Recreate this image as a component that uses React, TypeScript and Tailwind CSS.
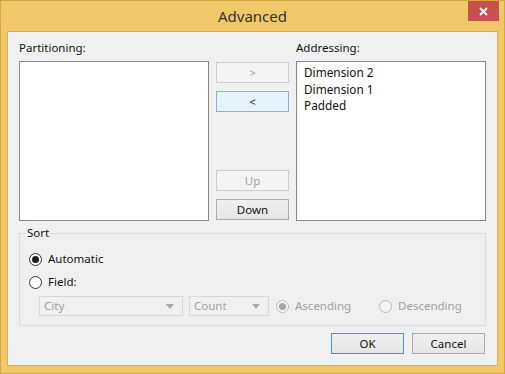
import React from "react";

const font = { fontFamily: '"Noto Sans", "Open Sans", sans-serif' };

function Radio({ checked, disabled }: { checked?: boolean; disabled?: boolean }) {
  return (
    <span
      className={
        "flex h-[13px] w-[13px] items-center justify-center rounded-full border " +
        (disabled ? "border-[#bcbcbc] bg-[#f4f4f4]" : "border-[#333333] bg-white")
      }
    >
      {checked && (
        <span className={"h-[7px] w-[7px] rounded-full " + (disabled ? "bg-[#a5a5a5]" : "bg-[#1e1e1e]")} />
      )}
    </span>
  );
}

function Btn({ label, kind }: { label: string; kind: "disabled" | "hot" | "normal" | "default" }) {
  const cls = {
    disabled: "border-[#cfcfcf] bg-[#f4f4f4] text-[#a3a3a3]",
    hot: "border-[#7eb4ea] bg-[#e5f1fb] text-[#222]",
    normal: "border-[#acacac] bg-gradient-to-b from-[#f0f0f0] to-[#e5e5e5] text-[#111]",
    default: "border-[#3399ff] bg-gradient-to-b from-[#f0f0f0] to-[#e5e5e5] text-[#111]",
  }[kind];
  return (
    <div className={"flex h-[21px] w-[73px] items-center justify-center border text-[11.5px] " + cls}>
      {label}
    </div>
  );
}

function Combo({ label, w }: { label: string; w: string }) {
  return (
    <div className={"flex h-[20px] items-center justify-between border border-[#d9d9d9] bg-[#f0f0f0] pl-[4px] pr-[8px] text-[#a0a0a0] " + w}>
      <span>{label}</span>
      <svg width="8" height="5" viewBox="0 0 8 5">
        <path d="M0 0h8L4 5z" fill="#a8a8a8" />
      </svg>
    </div>
  );
}

export default function App() {
  return (
    <div style={font} className="h-[374px] w-[505px] border border-[#d7a63c] bg-[#f0c86a] text-[#111]">
      {/* title bar */}
      <div className="grid h-[30px] grid-cols-[1fr_auto_1fr]">
        <div />
        <div className="pt-[2px] text-[15px] leading-[26px] text-[#333]">Advanced</div>
        <div className="flex justify-end pr-[5px]">
          <div className="flex h-[20px] w-[31px] items-center justify-center bg-[#c75050]">
            <svg width="9" height="9" viewBox="0 0 9 9">
              <path d="M1 1l7 7M8 1l-7 7" stroke="white" strokeWidth="1.8" />
            </svg>
          </div>
        </div>
      </div>

      {/* client area */}
      <div className="mx-[6px] h-[335px] border border-[#d9ae52] bg-[#f0f0f0] px-[11px] pt-[8px] text-[11.5px]">
        <div className="flex">
          <div className="flex w-[190px] flex-col">
            <div className="h-[21px] leading-[16px]">Partitioning:</div>
            <div className="h-[160px] border border-[#828790] bg-white" />
          </div>
          <div className="mx-[7px] flex w-[73px] flex-col justify-between pb-[1px] pt-[22px]">
            <div className="flex flex-col gap-[8px]">
              <Btn label=">" kind="disabled" />
              <Btn label="<" kind="hot" />
            </div>
            <div className="flex flex-col gap-[8px]">
              <Btn label="Up" kind="disabled" />
              <Btn label="Down" kind="normal" />
            </div>
          </div>
          <div className="flex w-[190px] flex-col">
            <div className="h-[21px] leading-[16px]">Addressing:</div>
            <div className="h-[160px] border border-[#828790] bg-white px-[7px] pt-[2px] text-[11.8px] leading-[16.5px]">
              <div>Dimension 2</div>
              <div>Dimension 1</div>
              <div>Padded</div>
            </div>
          </div>
        </div>

        {/* sort group */}
        <div className="relative mt-[12px] h-[93px] w-[467px] border border-[#dcdcdc] pl-[9px] pt-[17px]">
          <span className="absolute left-[6px] top-[-9px] bg-[#f0f0f0] px-[1px] leading-[16px]">Sort</span>
          <div className="flex h-[16px] items-center gap-[6px]">
            <Radio checked />
            <span>Automatic</span>
          </div>
          <div className="mt-[7px] flex h-[16px] items-center gap-[6px]">
            <Radio />
            <span>Field:</span>
          </div>
          <div className="mt-[6px] flex items-center pl-[10px]">
            <Combo label="City" w="w-[144px]" />
            <div className="ml-[6px]">
              <Combo label="Count" w="w-[80px]" />
            </div>
            <div className="ml-[7px] flex w-[97px] items-center gap-[6px] text-[#a0a0a0]">
              <Radio checked disabled />
              <span>Ascending</span>
            </div>
            <div className="ml-[6px] flex items-center gap-[6px] text-[#a0a0a0]">
              <Radio disabled />
              <span>Descending</span>
            </div>
          </div>
        </div>

        <div className="mt-[7px] flex justify-end gap-[8px] pr-[1px]">
          <Btn label="OK" kind="default" />
          <Btn label="Cancel" kind="normal" />
        </div>
      </div>
    </div>
  );
}
